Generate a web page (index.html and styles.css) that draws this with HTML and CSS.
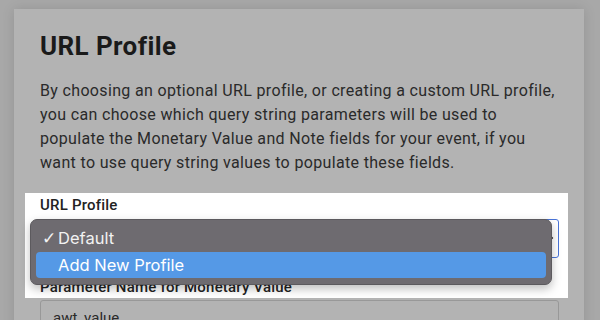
FILE: index.html
```html
<!DOCTYPE html>
<html lang="en">
<head>
  <meta charset="utf-8"/>
  <meta name="viewport" content="width=device-width, initial-scale=1.0"/>
  <title>URL Profile</title>
  <link rel="stylesheet" href="styles.css">
</head>
<body>

  <!-- Carte principale -->
  <section class="card">
    <h1>URL Profile</h1>
    <p class="intro">By choosing an optional URL profile, or creating a custom URL profile, you can choose which query string parameters will be used to populate the Monetary Value and Note fields for your event, if you want to use query string values to populate these fields.</p>

    <!-- Zone mise en avant -->
    <div class="spotlight">
      <label class="field-label">URL Profile</label>
      <div class="select-box">
        <span class="select-arrow"></span>

        <!-- Menu natif ouvert -->
        <ul class="popup">
          <li class="popup-item"><span class="check">✓</span>Default</li>
          <li class="popup-item active">Add New Profile</li>
        </ul>
      </div>
      <label class="field-label next">Parameter Name for Monetary Value</label>
    </div>

    <div class="text-input">awt_value</div>
  </section>

</body>
</html>
```

FILE: styles.css
```css
/* -------------------- Base -------------------- */
* { box-sizing: border-box; }
html, body {
  margin: 0;
  padding: 0;
  font-family: Roboto, "Liberation Sans", sans-serif;
  background: #a8a8a8;
  color: #1c1c1c;
  overflow: hidden;
}

/* -------------------- Carte -------------------- */
.card {
  width: 570px;
  margin: 9px 0 0 14px;
  padding: 21px 25px 20px 26px;
  background: #b3b3b3;
  box-shadow: 0 0 12px rgba(0, 0, 0, .12);
  min-height: 330px;
}
.card h1 {
  margin: 0;
  font-size: 26px;
  font-weight: 700;
  line-height: 32px;
  letter-spacing: .4px;
  color: #1a1a1a;
}
.intro {
  margin: 17px 0 18px;
  font-size: 16px;
  line-height: 24px;
  color: #2a2a2a;
  letter-spacing: .34px;
}

/* -------------------- Zone en surbrillance -------------------- */
.spotlight {
  margin: 0 -9px 0 -15px;
  padding: 1px 9px 0 15px;
  background: #fff;
  height: 105px;
}
.field-label {
  display: block;
  font-size: 15px;
  font-weight: 500;
  line-height: 22px;
  letter-spacing: .2px;
  color: #222;
}
.field-label.next {
  margin-top: 18px;
}

/* -------------------- Select -------------------- */
.select-box {
  position: relative;
  margin-top: 3px;
  height: 39px;
  border: 1px solid #4a74d8;
  border-radius: 3px;
  background: #fff;
}
.select-arrow {
  position: absolute;
  right: 6px;
  top: 15px;
  width: 6px;
  height: 6px;
  border-right: 2px solid #222;
  border-bottom: 2px solid #222;
  transform: rotate(45deg);
}

/* -------------------- Menu ouvert -------------------- */
.popup {
  position: absolute;
  left: -11px;
  top: -1px;
  width: 522px;
  margin: 0;
  padding: 5px 5px 6px;
  list-style: none;
  background: #6e6b70;
  border: 1px solid #5c5a5e;
  border-radius: 7px;
  box-shadow: 0 4px 10px rgba(0, 0, 0, .25);
  font-family: Inter, "Noto Sans", sans-serif;
  font-size: 16.5px;
  color: #f2f2f2;
  z-index: 10;
}
.popup-item {
  position: relative;
  height: 27px;
  line-height: 27px;
  padding-left: 22px;
  border-radius: 4px;
}
.popup-item.active {
  height: 26px;
  line-height: 26px;
  background: #5599e6;
  color: #fff;
}
.check {
  position: absolute;
  left: 6px;
  font-size: 17px;
  font-family: "DejaVu Sans", sans-serif;
}

/* -------------------- Champ texte -------------------- */
.text-input {
  margin-top: 2px;
  height: 38px;
  padding: 8px 12px;
  border: 1px solid #989898;
  border-radius: 3px;
  font-size: 15px;
  color: #2a2a2a;
}
```
